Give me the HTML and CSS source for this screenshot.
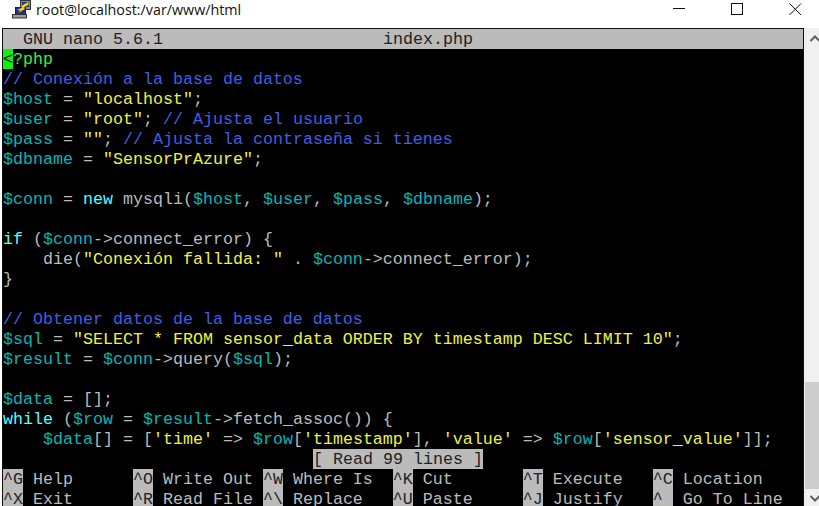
FILE: index.html
```html
<!DOCTYPE html>
<html lang="en">
<head>
<meta charset="utf-8">
<title>root@localhost:/var/www/html</title>
<link rel="stylesheet" href="styles.css">
</head>
<body>
<div class="window">
  <header class="titlebar">
    <svg class="app-icon" width="20" height="19" viewBox="0 0 20 19">
      <rect x="8.5" y="0.5" width="10" height="9" fill="#8a8a8a" stroke="#333"/>
      <rect x="10" y="2" width="7" height="5" fill="#1d2f9c"/>
      <rect x="3.5" y="7.5" width="10" height="7" fill="#1c2c9a" stroke="#222"/>
      <rect x="0.5" y="14.5" width="14" height="3.5" fill="#9a9a9a" stroke="#333"/>
      <path d="M16 2 L9 6 L10 7.5 L5 10 L8 10.5 L6.5 13 L13 9 L12 7.5 L17 4.5 Z" fill="#f4d81c" stroke="#7a6a00" stroke-width=".5"/>
    </svg>
    <span class="title-text">root@localhost:/var/www/html</span>
    <div class="controls">
      <svg class="ctl" width="13" height="13" viewBox="0 0 13 13"><path d="M0 5.5H12" stroke="#111" fill="none"/></svg>
      <svg class="ctl" width="13" height="13" viewBox="0 0 13 13"><rect x="0.5" y="0.5" width="11" height="11" stroke="#111" fill="none"/></svg>
      <svg class="ctl" width="13" height="13" viewBox="0 0 13 13"><path d="M0.5 0.5L12 12M12 0.5L0.5 12" stroke="#111" fill="none"/></svg>
    </div>
  </header>
  <div class="client">
    <main class="terminal">
      <div class="row nano-head"><span>  GNU nano 5.6.1</span><span class="file">index.php</span></div>
      <div class="row"><span class="cursor">&lt;</span><span class="tag">?php</span></div>
      <div class="row c">// Conexión a la base de datos</div>
      <div class="row"><span class="v">$host</span> = <span class="s">"localhost"</span>;</div>
      <div class="row"><span class="v">$user</span> = <span class="s">"root"</span>; <span class="c">// Ajusta el usuario</span></div>
      <div class="row"><span class="v">$pass</span> = <span class="s">""</span>; <span class="c">// Ajusta la contraseña si tienes</span></div>
      <div class="row"><span class="v">$dbname</span> = <span class="s">"SensorPrAzure"</span>;</div>
      <div class="row"></div>
      <div class="row"><span class="v">$conn</span> = <span class="k">new</span> mysqli(<span class="v">$host</span>, <span class="v">$user</span>, <span class="v">$pass</span>, <span class="v">$dbname</span>);</div>
      <div class="row"></div>
      <div class="row"><span class="k">if</span> (<span class="v">$conn</span>-&gt;connect_error) {</div>
      <div class="row">    die(<span class="s">"Conexión fallida: "</span> . <span class="v">$conn</span>-&gt;connect_error);</div>
      <div class="row">}</div>
      <div class="row"></div>
      <div class="row c">// Obtener datos de la base de datos</div>
      <div class="row"><span class="v">$sql</span> = <span class="s">"SELECT * FROM sensor_data ORDER BY timestamp DESC LIMIT 10"</span>;</div>
      <div class="row"><span class="v">$result</span> = <span class="v">$conn</span>-&gt;query(<span class="v">$sql</span>);</div>
      <div class="row"></div>
      <div class="row"><span class="v">$data</span> = [];</div>
      <div class="row"><span class="k">while</span> (<span class="v">$row</span> = <span class="v">$result</span>-&gt;fetch_assoc()) {</div>
      <div class="row">    <span class="v">$data</span>[] = [<span class="s">'time'</span> =&gt; <span class="v">$row</span>[<span class="s">'timestamp'</span>], <span class="s">'value'</span> =&gt; <span class="v">$row</span>[<span class="s">'sensor_value'</span>]];</div>
      <div class="row status-row"><span class="status">[ Read 99 lines ]</span></div>
      <div class="row"><span class="key">^G</span> Help      <span class="key">^O</span> Write Out <span class="key">^W</span> Where Is  <span class="key">^K</span> Cut       <span class="key">^T</span> Execute   <span class="key">^C</span> Location</div>
      <div class="row last-row"><span class="key">^X</span> Exit      <span class="key">^R</span> Read File <span class="key">^\</span> Replace   <span class="key">^U</span> Paste     <span class="key">^J</span> Justify   <span class="key">^ </span> Go To Line</div>
    </main>
    <aside class="scrollbar">
      <svg class="sb-btn" width="15" height="17" viewBox="0 0 15 17"><path d="M6.5 13L11 8.500L15.500 13" stroke="#606060" stroke-width="2" fill="none"/></svg>
      <div class="track"><div class="thumb"></div></div>
      <svg class="sb-btn" width="15" height="17" viewBox="0 0 15 17"><path d="M6.500 7L11 11.500L15.500 7" stroke="#606060" stroke-width="2" fill="none"/></svg>
    </aside>
  </div>
</div>
</body>
</html>
```
FILE: styles.css
```css
* { box-sizing: border-box; }
html, body { margin: 0; height: 100%; overflow: hidden; background: #fff; }
.window { width: 819px; height: 506px; display: flex; flex-direction: column; padding-left: 2px; }
.titlebar { height: 28px; flex: none; display: flex; align-items: flex-start; background: #fff; }
.app-icon { margin-left: 10px; flex: none; }
.title-text { margin-left: 4px; font: 14.3px/20px "Open Sans", "Liberation Sans", sans-serif; color: #111; }
.controls { margin-left: auto; display: flex; gap: 45px; margin-right: 17px; margin-top: 3px; }
.ctl { display: block; }
.client { flex: 1; display: flex; min-height: 0; }
.terminal { width: 802px; flex: none; background: #000; border: solid #111; border-width: 1px 1px 0 1px; color: #bbb; font: 16.667px/22px "Liberation Mono", "Courier New", monospace; overflow: hidden; }
.row { height: 20px; white-space: pre; }
.nano-head { background: #bbb; color: #222; }
.file { position: absolute; left: 383px; }
.cursor { display: inline-block; vertical-align: top; height: 20px; background: #11ee11; color: #0a0a0a; }
.tag { color: #44e844; }
.c { color: #3f5fe8; }
.v { color: #00b8b8; }
.s { color: #f0f040; }
.k { color: #55ffff; }
.status-row { padding-left: 310px; }
.status, .key { display: inline-block; vertical-align: top; height: 20px; background: #bbb; color: #222; }
.last-row { height: 17px; line-height: 12px; padding-top: 5px; }
.last-row .key { height: 17px; margin-top: -5px; padding-top: 5px; }
.scrollbar { flex: 1; background: #f0f0f0; display: flex; flex-direction: column; }
.sb-btn { flex: none; display: block; }
.track { flex: 1; display: flex; flex-direction: column; justify-content: flex-end; }
.thumb { height: 107px; background: #cdcdcd; margin-left: 1px; }
```
